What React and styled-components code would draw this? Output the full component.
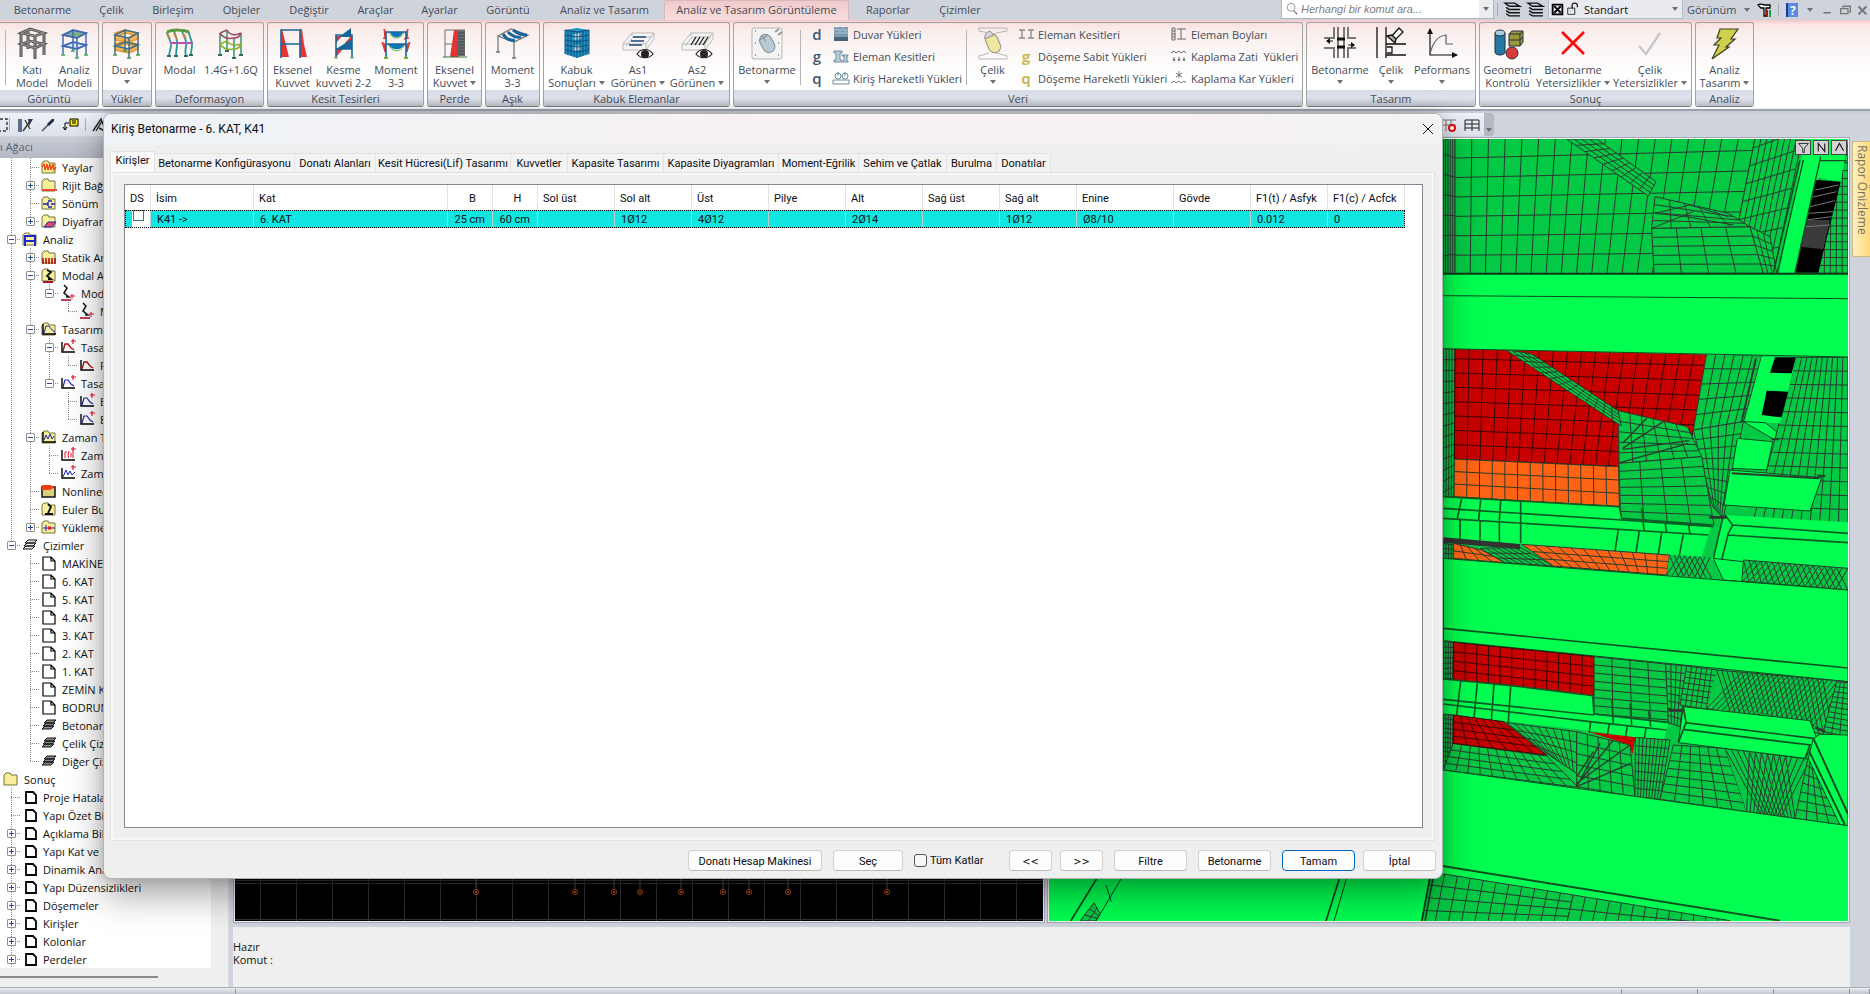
import React from 'react';
import styled, { createGlobalStyle } from 'styled-components';

/* ---------- ribbon drawings, 32x32 ---------- */

function Frame({ color = '#2a5cab', foot = '#3aa04a', width = 1.5, children }) {
  return (
    <g fill="none" stroke={color} strokeWidth={width}>
      {children}
      <path d="M4 8L14 3L27 6L18 11ZM4 19L14 15L27 18L18 22ZM4 8V28M14 3V24M27 6V28M18 11V31" />
      <path d="M2 28H6M12 24H16M25 28H29M16 31H20" stroke={foot} />
    </g>
  );
}

const art = {
  solid: (
    <g fill="none">
      <g stroke="#4b4b4b" strokeWidth="3">
        <path d="M5 6V30M12 3V22M28 6V28M19 9V32" />
        <path d="M5 6L14 2L28 6L19 9ZM5 17L14 14L28 17L19 21Z" strokeWidth="2.6" />
      </g>
      <g stroke="#9a9a9a">
        <path d="M5 6V30M12 3V22M28 6V28M19 9V32M5 6L14 2L28 6L19 9ZM5 17L14 14L28 17L19 21Z" />
      </g>
    </g>
  ),
  analysis: (
    <Frame color="#3f6bb5" foot="#44b04a">
      <path d="M4 8L14 3L27 6L18 11Z" fill="#7fae8c" />
      <path d="M4 19L14 15L27 18L18 22Z" fill="#dfe0f2" />
    </Frame>
  ),
  wall: (
    <Frame color="#3c6e8f" foot="#3aa04a">
      <path d="M4 6L14 3L27 6V12L18 15L4 13ZM4 17L14 14L27 17V22L18 26L4 23Z" fill="#f4b65c" stroke="#e79a2e" />
      <path d="M8 9L15 6L23 8L17 11ZM8 19L15 17L23 19L17 22Z" fill="#fff" stroke="#e79a2e" />
    </Frame>
  ),
  modal: (
    <g fill="none" strokeWidth="1.8">
      <path d="M3 5C9 2 20 3 25 5" stroke="#5a9b2f" strokeWidth="3" />
      <path d="M3 5C3 11 8 13 7 19S5 26 5 29M10 4C12 10 14 14 13 19S12 26 12 29" stroke="#1f9a9a" />
      <path d="M18 4C20 10 23 13 22 19S21 26 22 29M25 5C25 11 29 13 28 19S27 25 27 28" stroke="#1f9a9a" />
      <path d="M6 16H29" stroke="#b055b5" strokeWidth="2" />
      <path d="M3 6L6 12M10 6L13 12M19 6L22 12" stroke="#c78a2a" />
      <path d="M3 29H7M10 29H14M20 29H24M25 28H29" stroke="#2d6b5a" />
    </g>
  ),
  combo: (
    <g fill="none" strokeWidth="1.6">
      <path d="M5 6V28M12 3V24M26 6V28M19 11V31" stroke="#3b9b78" />
      <path d="M5 6C8 11 14 12 19 11C23 11 25 9 26 6M12 3C14 8 21 9 26 6M5 6L12 3" stroke="#a04a6a" />
      <path d="M5 17C8 22 14 23 19 22C23 22 25 20 26 17M12 14C14 18 21 19 26 17M5 17L12 14" stroke="#8fae2a" />
      <path d="M3 28H7M10 24H14M24 28H28M17 31H21" stroke="#2d6b5a" strokeWidth="2" />
    </g>
  ),
  axial: (
    <g>
      <path d="M4 2H5L12 30H4ZM23 2H25L27 17L30 30H23Z" fill="#e53232" />
      <path d="M4 31V3H23V31M4 17H23" fill="none" stroke="#15669c" strokeWidth="1.6" />
    </g>
  ),
  shear: (
    <g>
      <path d="M8 9L14 9L8 16ZM17 16L24 8V20H17ZM8 22L15 22L8 30Z" fill="#e53232" />
      <path d="M11 10L23 1V10ZM8 22L24 12V22Z" fill="#15669c" />
      <path d="M8 31V8H24V31M8 22H24" fill="none" stroke="#15669c" strokeWidth="1.6" />
      <path d="M6 31H10M22 31H26" stroke="#7fae2f" />
    </g>
  ),
  moment: (
    <g>
      <path d="M6 5L4 2L5 12ZM26 5L28 2L27 12ZM6 18L2 15L5 25ZM26 18L30 15L27 25ZM6 12L3 11ZM24 12L29 11Z" fill="#e53232" stroke="#e53232" />
      <path d="M10 5H23C21 12 12 12 10 5ZM8 17H25C21 24 12 24 8 17Z" fill="#0e74b8" />
      <path d="M8 17C12 26 21 26 25 17M9 5C12 13 21 13 24 5" fill="none" stroke="#56b83a" />
      <path d="M6 31V5H26V31M6 17H26" fill="none" stroke="#15669c" strokeWidth="1.6" />
      <path d="M4 31H8M24 31H28" stroke="#7fae2f" strokeWidth="2" />
    </g>
  ),
  shearWall: (
    <g>
      <path d="M15 3H20V30H11Z" fill="#e53232" />
      <path d="M6 30V3H26M6 17H16" fill="none" stroke="#6b7075" />
      <path d="M19 3H26V29H19Z" fill="#6b7075" />
      <path d="M19 6H26M19 9H26M19 12H26M19 15H26M19 18H26M19 21H26M19 24H26M19 27H26" stroke="#40454a" />
      <path d="M4 30H28" stroke="#2f7a3c" />
    </g>
  ),
  purlin: (
    <g fill="none" stroke="#777" strokeWidth="1.3">
      <path d="M1 9L14 2L31 8L17 15ZM1 9V25M17 15V31" />
      <path d="M6 7C9 12 13 14 18 13M11 5C15 9 19 11 24 10M16 3C20 6 24 8 30 8" stroke="#15669c" strokeWidth="3" />
      <path d="M-1 25H3M15 31H19" />
    </g>
  ),
  shell: (
    <g>
      <path d="M4 3L16 1L28 3V27L16 31L4 27Z" fill="#1e94c4" />
      <path d="M12 7L20 6V12L12 13ZM12 19L19 18L20 23L12 24Z" fill="#c4d8df" />
      <path d="M4 3L16 5L28 3M16 5V31M7 3V28M10 4V29M13 4V30M19 4V30M22 4V29M25 3V28M4 8L16 10L28 8M4 13L16 15L28 13M4 18L16 20L28 18M4 23L16 25L28 23M4 3V27M28 3V27" fill="none" stroke="#0e4f7d" />
    </g>
  ),
  eye: (
    <g>
      <path d="M15 27C19 21 27 21 31 27C27 32 19 32 15 27Z" fill="#fff" stroke="#222" strokeWidth="1.2" />
      <circle cx="23" cy="27" r="4" fill="#2a2020" />
    </g>
  ),
  slab: (
    <path d="M1 17L10 6H32V12L24 23H1ZM1 17H24L32 6M24 17V23M10 6V9M4 19L11 10H30" fill="#f7f7f7" stroke="#b9b9b9" />
  ),
  bolt: (
    <path d="M11 2H29L22 12H26L17 20H20L3 32L10 18H5L12 11H8Z" fill="#cfd04c" stroke="#3d3d20" strokeWidth="1.2" />
  ),
  cross: <path d="M5 5L27 27M27 5L5 27" stroke="#ff0808" strokeWidth="2.6" fill="none" />,
  check: <path d="M5 19L12 27L26 6" stroke="#c6c7cd" strokeWidth="2.4" fill="none" />,
  perf: (
    <g fill="none" stroke="#111" strokeWidth="1.2">
      <path d="M4 2V28H31" />
      <path d="M4 1L1 7H7ZM32 28L26 25V31Z" fill="#111" stroke="none" />
      <path d="M4 27C7 14 12 9 20 8V17H27" stroke="#4c6478" />
    </g>
  ),
  solids: (
    <g stroke="#22303c" strokeWidth="1">
      <path d="M3 6V25C3 29 13 29 13 25V6" fill="#2478a6" />
      <ellipse cx="8" cy="6" rx="5" ry="3" fill="#a9cfe2" />
      <path d="M17 7L20 4H31V15L28 19H17Z" fill="#9a983a" />
      <path d="M17 7H28V19M28 7L31 4M17 13H28L31 10" fill="none" />
      <circle cx="20" cy="26" r="6" fill="#d93a3a" />
    </g>
  ),
  rcDesign: (
    <g fill="none" stroke="#777" strokeWidth="2">
      <path d="M10 0V11H0M14 0V31M10 31V21H0M20 0V31M24 0V11H32M24 31V21H32" />
      <path d="M13 12H21M13 20H21" stroke="#111" strokeWidth="3" />
      <path d="M3 14H9M24 18H29" stroke="#111" strokeWidth="1.2" />
      <path d="M2 14L6 11V17ZM31 18L27 15V21Z" fill="#111" stroke="none" />
    </g>
  ),
  steelDesign: (
    <g fill="none" stroke="#111" strokeWidth="1.3">
      <path d="M2 0V31M11 0V31M11 17H31M11 28H31M12 20H17V26H12" />
      <path d="M16 10L24 1L28 5L20 13Z" fill="#fff" />
      <path d="M12 9L17 8L21 12L20 16Z" fill="#aaa" />
    </g>
  ),
  mouse: (
    <g stroke="#7f8a92" fill="none">
      <rect x="1" y="1" width="30" height="31" rx="2" fill="#f4f4f4" stroke="#b5b5b5" />
      <path d="M4 4H5M4 28H5M27 28H28M4 16H5M27 16H28M24 5L28 2M27 8L31 5" stroke="#999" strokeWidth="2" />
      <rect x="10" y="7" width="12" height="19" rx="6" fill="#b8cad4" transform="rotate(-28 16 16)" />
      <path d="M9 13L17 8M11 8L15 15" />
    </g>
  ),
  steelMouse: (
    <g stroke="#8b8b8b" fill="none">
      <path d="M2 1H30V4L19 6M2 1V4L12 6M2 32H30V29L19 26M2 32V29L12 26" stroke="#b5b5b5" />
      <rect x="10" y="6" width="12" height="20" rx="6" fill="#f1e8a0" transform="rotate(-24 16 16)" />
      <path d="M8 12L17 8L13 4C9 5 7 9 8 12Z" fill="#d4d4d4" />
    </g>
  ),
};

art.as1 = (
  <g>
    {art.slab}
    <path d="M11 10H24M9 14H22M7 18H20" stroke="#1d4a7a" strokeWidth="1.6" />
    {art.eye}
  </g>
);
art.as2 = (
  <g>
    {art.slab}
    <path d="M10 18L15 10M14 18L19 10M18 18L23 10M22 18L27 10" stroke="#222" strokeWidth="1.4" />
    {art.eye}
  </g>
);

/* ---------- 16x16 drawings ---------- */

const folder = (
  <path d="M1 14V4L3 2H7L8 4H14V14Z" fill="#f8ef9c" stroke="#77733a" />
);
const axes = <path d="M2 3V13H15" fill="none" stroke="#000" strokeWidth="1.4" />;
const plus = <path d="M13 0V5M11 2H16" stroke="#e8112d" strokeWidth="1.2" />;
const curve = 'M3 12L5 5H8L11 9L14 11';
const stack = 'M6 3H15L12 6H3ZM5 6H14L11 9H2ZM4 9H13L10 12H1Z';

const small = {
  folder,
  spring: <g>{folder}<path d="M1 8L3 5L4 11L6 5L7 11L9 5L10 11L12 5L13 11L15 8" fill="none" stroke="#f04a1a" strokeWidth="1.4" /></g>,
  rigid: <g>{folder}<path d="M1 13H16" stroke="#f04a3a" strokeWidth="2" /></g>,
  damper: <g>{folder}<path d="M2 9H7M7 7V11M11 6H7M11 12H7M10 9H14" fill="none" stroke="#1c23b4" strokeWidth="1.4" /></g>,
  diaphragm: <g>{folder}<path d="M3 14L7 9H15L11 14Z" fill="#e54a6b" stroke="#1c23b4" /></g>,
  frame: <g>{folder}<path d="M3 15V5H13V15M3 10H13" fill="none" stroke="#1a28d2" strokeWidth="2" /></g>,
  loads: <g>{folder}<path d="M2 9V15M5 9V15M8 9V15M11 9V15M14 9V15" stroke="#b01010" strokeWidth="1.6" /></g>,
  modeFolder: <g>{folder}<path d="M6 3L10 5L6 9L10 12H7" fill="none" stroke="#111" strokeWidth="1.8" /><path d="M2 15H12" stroke="#b01030" strokeWidth="2" /></g>,
  mode: <g><path d="M4 0L7 3L4 8L9 12H6" fill="none" stroke="#111" strokeWidth="1.5" /><path d="M1 15H11" stroke="#b01030" strokeWidth="1.6" /><path d="M12 9V14M10 11H15" stroke="#e8112d" /></g>,
  spectrumFolder: <g>{folder}{axes}<path d={curve} fill="none" stroke="#1c23b4" /></g>,
  spectrumRed: <g>{axes}{plus}<path d={curve} fill="none" stroke="#b01010" strokeWidth="1.4" /></g>,
  redCurve: <g>{axes}<path d={curve} fill="none" stroke="#b01010" strokeWidth="1.4" /></g>,
  spectrumBlue: <g>{axes}{plus}<path d={curve} fill="none" stroke="#1c23c4" strokeWidth="1.2" /></g>,
  timeFolder: <g>{folder}{axes}<path d="M3 11L5 6L7 10L9 5L11 10L13 7" fill="none" stroke="#1c23b4" /></g>,
  timeRed: <g>{axes}{plus}<path d="M5 5V11M5 5H7M9 4L8 8L9 11M11 6V10M13 5V11" fill="none" stroke="#e8112d" /></g>,
  timeBlue: <g>{axes}{plus}<path d="M3 12L6 5L8 10L10 6L12 10L15 7" fill="none" stroke="#1c23c4" /></g>,
  nonlinear: <g><path d="M1 14V4H14V14Z" fill="#d9cf7a" stroke="#111" strokeWidth="1.5" /><path d="M1 2H9L14 4L9 7H1Z" fill="#f0400f" /></g>,
  euler: <g>{folder}<path d="M7 3L10 6L7 12M4 13H12" fill="none" stroke="#111" strokeWidth="1.8" /></g>,
  combos: <g>{folder}<path d="M2 9H14M5 6V12" stroke="#1c23b4" /><path d="M7 9H10" stroke="#e8112d" strokeWidth="3" /></g>,
  stack: <path d={stack} fill="#e8e8e8" stroke="#111" />,
  stackDark: <path d={stack} fill="#8a8a8a" stroke="#111" />,
  sheet: <path d="M2 2H10L14 6V15H2ZM10 2V6H14" fill="#fff" stroke="#000" strokeWidth="1.2" />,
  page: <path d="M4 3H11L14 6V14H4Z" fill="#fff" stroke="#000" strokeWidth="1.8" />,
  brick: <g><path d="M1 1H15V15H1Z" fill="#7b9ab0" /><path d="M1 11H15V15H1Z" fill="#48637a" /><path d="M1 4H15M1 7H15M4 1V4M10 1V4M7 4V7M13 4V7" stroke="#a9c0cf" /></g>,
  sections: <path d="M1 3H9V5H7V12H9V14H1V12H3V5H1ZM9 7H15V8H14V13H15V14H10V13H11V8H9Z" fill="#b9d0de" stroke="#6d8ba0" />,
  beamLoad: <g fill="none" stroke="#6d8ba0"><circle cx="5" cy="6" r="3" /><circle cx="12" cy="6" r="3" /><path d="M0 10H16V14H0ZM5 6V2M12 6V2" /></g>,
  ibeams: <path d="M1 4H7M4 4V12M1 12H7M10 4H16M13 4V12M10 12H16" stroke="#8a8a8a" strokeWidth="1.4" fill="none" />,
  lengths: <path d="M1 2H4V14H1ZM1 5H4M1 8H4M1 11H4M6 3H15M10 3V13M6 13H15" stroke="#666" fill="none" />,
  coverDead: <path d="M0 5L3 3L5 5L8 3L10 5L13 3L15 5M3 9V12M8 9V12M13 9V12M2 11L3 13L4 11M7 11L8 13L9 11M12 11L13 13L14 11" stroke="#666" fill="none" />,
  coverSnow: <path d="M0 13L3 11L5 13L8 11L10 13L13 11L15 13M8 1V8M5 3L11 7M11 3L5 7" stroke="#777" fill="none" />,
  layers: <path d="M1 2H10L15 5H5ZM2 6L5 8H15M2 9L5 11H15M2 12L5 14H15" fill="none" stroke="#111" strokeWidth="1.3" />,
  lock: <g><path d="M2 7H10V14H2Z" fill="#fff" stroke="#111" /><path d="M7 7V3C8 0 13 1 13 4V6" fill="none" stroke="#111" strokeWidth="1.4" /><path d="M4 9H5M7 9H8M5 11H6" stroke="#2a4a9a" /></g>,
  boxed: <path d="M2 2H14V14H2ZM4 4L12 12M12 4L4 12" fill="none" stroke="#000" strokeWidth="2.2" />,
  tools: <g><path d="M1 3C3 1 5 3 8 3H13V6H9V14H7V6H4Z" fill="#fff" stroke="#000" strokeWidth="1.3" /><path d="M10 8V15" stroke="#b01010" strokeWidth="2" /><path d="M13 8V15" stroke="#1aa03a" strokeWidth="2" /></g>,
  help: <g><path d="M2 1H14V15H2Z" fill="#5a8be0" /><path d="M2 1H4V15H2Z" fill="#1d3c8a" /></g>,
  minimize: <path d="M3 12H12" stroke="#777" strokeWidth="2" />,
  restore: <path d="M5 7V4H14V11H12M2 7H11V13H2Z" fill="none" stroke="#777" strokeWidth="1.6" />,
  close: <path d="M4 4L13 13M13 4L4 13" stroke="#777" strokeWidth="2.4" />,
  ruler: <g><path d="M1 2H5V15H1Z" fill="#5a6f86" /><path d="M6 14L14 3M8 3L13 12" stroke="#333" strokeWidth="1.3" /><path d="M11 2L16 2L12 9Z" fill="#2a3c55" /></g>,
  pen: <g><path d="M2 14L9 7" stroke="#555" strokeWidth="1.6" /><path d="M9 9L7 7L12 2L14 2V4Z" fill="#1d2c44" /></g>,
  note: <g><path d="M7 2H15V9H7Z" fill="#ffec1f" stroke="#000" /><path d="M9 4H13M9 6H13M6 6H2V13M0 10L2 13L4 10" fill="none" stroke="#000" /></g>,
  dimension: <path d="M0 14L4 8L8 2L11 10M3 14L9 4M6 11L12 14M12 2V12" fill="none" stroke="#222" strokeWidth="1.4" />,
  selectBox: <path d="M0 2H12V14H0" fill="none" stroke="#333" strokeDasharray="3 2" strokeWidth="1.4" />,
  gridRec: <g><path d="M1 3H15M1 8H15M5 3V14M10 3V14M1 3V14" fill="none" stroke="#777" /><circle cx="11" cy="11" r="3" fill="#fff" stroke="#e01010" strokeWidth="2" /></g>,
  grid: <path d="M1 3H15M1 7H15M1 3V14M8 3V14M15 3V14M1 11H15" fill="none" stroke="#222" />,
  search: <g fill="none" stroke="#8a8a8a"><circle cx="7" cy="6" r="4.5" /><path d="M10 10L14 14" strokeWidth="1.6" /></g>,
  filter: <path d="M2 3H14L9 9V14H7V9Z" fill="none" stroke="#111" />,
  north: <path d="M4 13V3L12 13V3" fill="none" stroke="#111" strokeWidth="1.3" />,
  up: <path d="M3 12L8 3L13 12" fill="none" stroke="#111" strokeWidth="1.3" />,
};

function Icon({ name, size = 16 }) {
  return (
    <Svg viewBox="0 0 16 16" $size={size} aria-hidden="true">
      {small[name]}
    </Svg>
  );
}

/* ---------- data ---------- */

const menu = [
  ['Betonarme', 85],
  ['Çelik', 53],
  ['Birleşim', 70],
  ['Objeler', 67],
  ['Değiştir', 68],
  ['Araçlar', 65],
  ['Ayarlar', 63],
  ['Görüntü', 74],
  ['Analiz ve Tasarım', 119],
  ['Analiz ve Tasarım Görüntüleme', 185],
  ['Raporlar', 78],
  ['Çizimler', 66],
];

const treeRows = [
  ['|t', '', 'spring', 'Yaylar'],
  ['|t', '+', 'rigid', 'Rijit Bağlar'],
  ['|t', '', 'damper', 'Sönüm'],
  ['|l', '+', 'diaphragm', 'Diyafram'],
  ['t', '-', 'frame', 'Analiz'],
  ['|t', '+', 'loads', 'Statik Analiz'],
  ['|t', '-', 'modeFolder', 'Modal Analiz'],
  ['||l', '-', 'mode', 'Modal'],
  ['||.l', '', 'mode', 'Mod'],
  ['|t', '-', 'spectrumFolder', 'Tasarım'],
  ['||t', '-', 'spectrumRed', 'Tasarım'],
  ['|||l', '', 'redCurve', 'R'],
  ['||l', '-', 'spectrumBlue', 'Tasarım'],
  ['||.t', '', 'spectrumBlue', 'E'],
  ['||.l', '', 'spectrumBlue', 'E'],
  ['|t', '-', 'timeFolder', 'Zaman Tanım'],
  ['||t', '', 'timeRed', 'Zaman'],
  ['||l', '', 'timeBlue', 'Zaman'],
  ['|t', '', 'nonlinear', 'Nonlineer'],
  ['|t', '', 'euler', 'Euler Burkulma'],
  ['|l', '+', 'combos', 'Yüklemeler'],
  ['l', '-', 'stack', 'Çizimler'],
  ['.t', '', 'sheet', 'MAKİNE'],
  ['.t', '', 'sheet', '6. KAT'],
  ['.t', '', 'sheet', '5. KAT'],
  ['.t', '', 'sheet', '4. KAT'],
  ['.t', '', 'sheet', '3. KAT'],
  ['.t', '', 'sheet', '2. KAT'],
  ['.t', '', 'sheet', '1. KAT'],
  ['.t', '', 'sheet', 'ZEMİN KAT'],
  ['.t', '', 'sheet', 'BODRUM'],
  ['.t', '', 'stackDark', 'Betonarme'],
  ['.t', '', 'stackDark', 'Çelik Çizim'],
  ['.l', '', 'stackDark', 'Diğer Çizim'],
  ['', '', 'folder', 'Sonuç'],
  ['t', '', 'page', 'Proje Hataları'],
  ['t', '', 'page', 'Yapı Özet Bilgi'],
  ['t', '+', 'page', 'Açıklama Bilgi'],
  ['t', '+', 'page', 'Yapı Kat ve'],
  ['t', '+', 'page', 'Dinamik Analiz'],
  ['t', '+', 'page', 'Yapı Düzensizlikleri'],
  ['t', '+', 'page', 'Döşemeler'],
  ['t', '+', 'page', 'Kirişler'],
  ['t', '+', 'page', 'Kolonlar'],
  ['t', '+', 'page', 'Perdeler'],
];

const dialogTabs = [
  ['Kirişler', 45],
  ['Betonarme Konfigürasyonu', 140],
  ['Donatı Alanları', 81],
  ['Kesit Hücresi(Lif) Tasarımı', 135],
  ['Kuvvetler', 57],
  ['Kapasite Tasarımı', 96],
  ['Kapasite Diyagramları', 115],
  ['Moment-Eğrilik', 80],
  ['Sehim ve Çatlak', 88],
  ['Burulma', 50],
  ['Donatılar', 54],
];

const columns = [
  { title: 'DS', width: 26 },
  { title: 'İsim', width: 103, value: 'K41 ->' },
  { title: 'Kat', width: 194, value: '6. KAT' },
  { title: 'B', width: 45, value: '25 cm', head: 'center', align: 'right' },
  { title: 'H', width: 45, value: '60 cm', head: 'center', align: 'right' },
  { title: 'Sol üst', width: 77 },
  { title: 'Sol alt', width: 77, value: '1Ø12' },
  { title: 'Üst', width: 77, value: '4Ø12' },
  { title: 'Pilye', width: 77 },
  { title: 'Alt', width: 77, value: '2Ø14' },
  { title: 'Sağ üst', width: 77 },
  { title: 'Sağ alt', width: 77, value: '1Ø12' },
  { title: 'Enine', width: 97, value: 'Ø8/10' },
  { title: 'Gövde', width: 77 },
  { title: 'F1(t) / Asfyk', width: 77, value: '0.012' },
  { title: 'F1(c) / Acfck', width: 77, value: '0' },
];

/* ---------- 3D model ---------- */

const bright = '#00ff50';
const dark = '#03c944';
const red = '#c80000';
const orange = '#ff6414';

// lean > 0 crosses two slanted families of lines instead of upright ones
function meshPath([a, b, c, d], nx, ny, lean) {
  const at = (p, q, t) => [p[0] + (q[0] - p[0]) * t, p[1] + (q[1] - p[1]) * t];
  const seg = (p, q) => `M${p[0].toFixed(1)} ${p[1].toFixed(1)}L${q[0].toFixed(1)} ${q[1].toFixed(1)}`;
  let out = '';
  for (let i = 0; i <= nx; i += 1) {
    if (lean) {
      if (i + lean <= nx) out += seg(at(a, b, i / nx), at(d, c, (i + lean) / nx));
      if (i - lean >= 0) out += seg(at(a, b, i / nx), at(d, c, (i - lean) / nx));
    } else {
      out += seg(at(a, b, i / nx), at(d, c, i / nx));
    }
  }
  for (let j = 0; j <= ny; j += 1) out += seg(at(a, d, j / ny), at(b, c, j / ny));
  return out;
}

// q is four corners, clockwise from the top left
function Mesh({ q, nx, ny, lean = 0, fill = dark }) {
  const pts = [];
  for (let i = 0; i < 8; i += 2) pts.push([q[i], q[i + 1]]);
  return (
    <g>
      <polygon points={q.join(' ')} fill={fill} />
      <path d={meshPath(pts, nx, ny, lean)} fill="none" stroke={fill === red ? '#3c0505' : '#2c3a30'} />
    </g>
  );
}

function Model() {
  return (
    <Scene viewBox="-1056 87 2400 2346" preserveAspectRatio="xMaxYMin slice" strokeWidth="3" role="img" aria-label="3D model">
      <rect x="-1056" y="80" width="2400" height="2360" fill={dark} />

      {/* top storey */}
      <Mesh q={[130, 70, 165, 86, 165, 490, 130, 500]} nx={5} ny={7} />
      <Mesh q={[165, 86, 1070, 60, 985, 490, 165, 494]} nx={18} ny={7} />
      <Mesh q={[1070, 60, 1225, 0, 1125, 470, 985, 490]} nx={8} ny={8} />
      <Mesh q={[755, 355, 1050, 350, 1090, 490, 762, 490]} nx={4} ny={5} />
      <Mesh q={[765, 260, 985, 310, 1050, 350, 755, 355]} nx={5} ny={4} />
      <path d="M765 310L870 285L985 320M755 355L880 305M765 310L860 320L1000 345" fill="none" stroke="#2c3a30" />
      <Mesh q={[500, 87, 590, 87, 768, 215, 745, 258]} nx={4} ny={9} />
      <Mesh q={[1050, 350, 1110, 380, 1130, 490, 1090, 490]} nx={3} ny={5} />
      <Mesh q={[1262, 87, 1344, 87, 1344, 490, 1255, 490]} nx={5} ny={17} />
      <polygon points="1215,87 1344,87 1322,215 1255,205 1185,488 1138,488" fill={bright} />
      <polygon points="1248,210 1322,215 1255,488 1185,488" fill="#000" />
      <polygon points="1222,330 1290,330 1270,418 1200,410" fill="#3a3a3a" />
      <path d="M1245 240L1315 225M1235 262L1310 245M1230 290L1305 272M1225 310L1300 305M1220 330L1295 320M1218 350L1290 345" stroke="#777" />
      <path d="M1200 150L1120 488M1210 150L1132 488M1262 140L1185 488M1258 152H1340" stroke="#0c4a20" strokeWidth="4" />

      {/* first beam, then the storey below */}
      <Mesh q={[130, 716, 165, 718, 162, 1160, 130, 1180]} nx={4} ny={14} />
      <Mesh q={[165, 703, 927, 722, 856, 1078, 163, 1047]} nx={18} ny={8} fill={red} />
      <Mesh q={[163, 1047, 656, 1070, 658, 1190, 162, 1160]} nx={13} ny={3} fill={orange} />
      <Mesh q={[920, 730, 1085, 738, 1030, 935, 880, 960]} nx={6} ny={5} />
      <Mesh q={[880, 960, 1030, 935, 970, 1225, 938, 1190]} nx={6} ny={8} />
      <Mesh q={[655, 902, 862, 950, 905, 1040, 657, 1060]} nx={6} ny={5} />
      <Mesh q={[657, 1060, 905, 1040, 942, 1245, 662, 1228]} nx={4} ny={7} />
      <path d="M668 1015L790 935M668 1018L868 992M668 1000L740 925M660 1058L865 1000" stroke="#2c3a30" strokeWidth="4" />
      <Mesh q={[315, 718, 395, 732, 655, 903, 664, 948]} nx={4} ny={13} />
      <Mesh q={[1190, 742, 1344, 742, 1344, 1240, 1060, 1230]} nx={10} ny={12} />
      <polygon points="130,490 1344,490 1344,742 130,716" fill={bright} />
      <path d="M130 491H1344" stroke="#123818" strokeWidth="6" />
      <path d="M130 557L1344 566M130 716L1344 741" stroke="#0c4a20" />
      <polygon points="1085,740 1190,742 1140,940 1035,935" fill={bright} />
      <polygon points="1125,742 1188,742 1175,790 1110,788" fill="#000" />
      <polygon points="1100,842 1165,845 1145,922 1085,915" fill="#000" />
      <polygon points="1030,935 1095,938 1130,965 1125,990" fill={bright} stroke="#0c4a20" />
      <polygon points="1012,985 1118,995 1100,1080 997,1075" fill={bright} stroke="#0c4a20" />
      <polygon points="990,1080 1265,1103 1230,1203 972,1185" fill={bright} stroke="#0c4a20" />
      <path d="M1068 745L1025 935M995 1090L1258 1105M1252 1097H1276M1115 988H1136" stroke="#2c3a30" strokeWidth="6" />

      {/* stepped beam */}
      <polygon points="130,1160 658,1190 665,1228 935,1245 905,1340 130,1287" fill={bright} />
      <path d="M130 1160L658 1190L665 1225L935 1245M130 1195L665 1230L940 1250M130 1225L925 1275M185 1165L172 1225M242 1168L236 1230M302 1172L298 1232M362 1175V1300M180 1228V1288M240 1232V1290M298 1235V1295M655 1258L645 1325M718 1262L708 1328M785 1268L775 1332M850 1272L838 1337M725 1195L732 1260M795 1235L800 1268M865 1240L870 1272" fill="none" stroke="#0b5c24" strokeWidth="5" />
      <polygon points="975,1215 1344,1237 1344,1375 935,1350" fill={bright} />
      <path d="M975 1215L998 1245L1344 1270M998 1245L985 1270L965 1350M985 1275L1344 1298M970 1215L940 1345" fill="none" stroke="#0b5c24" strokeWidth="5" />
      <path d="M928 1222H980" stroke="#333" strokeWidth="8" />
      <Mesh q={[130, 1300, 162, 1305, 162, 1345, 130, 1345]} nx={4} ny={3} />
      <Mesh q={[160, 1300, 245, 1320, 315, 1358, 160, 1345]} nx={4} ny={2} fill={orange} />
      <Mesh q={[240, 1315, 360, 1312, 460, 1368, 315, 1358]} nx={7} ny={3} />
      <Mesh q={[365, 1303, 808, 1335, 800, 1395, 460, 1368]} nx={12} ny={3} fill={orange} />
      <Mesh q={[808, 1335, 930, 1342, 935, 1405, 800, 1395]} nx={8} ny={0} lean={2} />
      <Mesh q={[1030, 1350, 1344, 1375, 1344, 1440, 1010, 1412]} nx={18} ny={1} lean={2} />
      <polygon points="940,1345 1030,1355 1025,1415 970,1410" fill={bright} stroke="#0c4a20" />
      <path d="M130 1290L360 1310" stroke="#333" strokeWidth="16" />

      {/* second beam */}
      <polygon points="130,1345 1344,1440 1344,1715 130,1592" fill={bright} stroke="#0c4a20" />
      <path d="M130 1555L1344 1674" stroke="#0b5020" strokeWidth="5" />
      <Mesh q={[130, 1595, 160, 1597, 158, 1705, 130, 1708]} nx={4} ny={7} />
      <Mesh q={[160, 1597, 582, 1640, 580, 1758, 160, 1710]} nx={12} ny={4} fill={red} />
      <Mesh q={[582, 1640, 797, 1662, 808, 1830, 582, 1812]} nx={4} ny={7} />
      <Mesh q={[797, 1662, 860, 1668, 840, 1850, 805, 1838]} nx={4} ny={8} />
      <Mesh q={[860, 1668, 950, 1680, 935, 1800, 840, 1785]} nx={6} ny={7} />
      <Mesh q={[950, 1680, 1344, 1715, 1300, 1880, 920, 1795]} nx={26} ny={1} lean={5} />
      <Mesh q={[1310, 1715, 1344, 1718, 1344, 1880, 1270, 1865]} nx={3} ny={10} />
      <polygon points="130,1707 335,1727 578,1757 582,1812 805,1838 790,1895 570,1862 130,1812" fill={bright} />
      <path d="M130 1707L335 1727L578 1757L582 1812L808 1838M130 1768L582 1815M130 1782L570 1835L800 1860M182 1712L170 1815M232 1717L222 1825M282 1722L274 1832M332 1727L325 1838M572 1835L568 1868M628 1842L622 1875M682 1848L676 1882M738 1855L732 1888M635 1770L640 1840M690 1780L695 1845M745 1800L752 1850" fill="none" stroke="#0b5c24" strokeWidth="5" />

      {/* lowest storey */}
      <Mesh q={[130, 1812, 160, 1815, 155, 1985, 130, 1980]} nx={4} ny={12} />
      <Mesh q={[160, 1900, 440, 1938, 535, 2032, 130, 1980]} nx={11} ny={4} />
      <Mesh q={[160, 1815, 310, 1835, 440, 1935, 160, 1900]} nx={7} ny={4} fill={red} />
      <Mesh q={[320, 1838, 530, 1865, 530, 1990, 440, 1930]} nx={9} ny={4} />
      <Mesh q={[530, 1865, 690, 1905, 705, 2060, 530, 2030]} nx={5} ny={5} />
      <polygon points="565,1865 706,1882 697,1935 690,1905" fill={red} />
      <path d="M530 2025L640 1890M530 2020L690 1905M530 2030L692 1960M530 2030L600 1900M530 2000L580 1925" stroke="#2c3a30" strokeWidth="4" />
      <Mesh q={[706, 1882, 810, 1890, 780, 2068, 705, 2060]} nx={9} ny={0} lean={2} />
      <Mesh q={[706, 1882, 810, 1890, 780, 2068, 705, 2060]} nx={9} ny={7} />
      <Mesh q={[820, 1905, 975, 1915, 1040, 2105, 780, 2068]} nx={6} ny={7} />
      <Mesh q={[975, 1915, 1230, 1948, 1185, 2125, 1040, 2105]} nx={14} ny={1} lean={4} />
      <Mesh q={[1225, 1940, 1245, 1960, 1320, 2145, 1185, 2125]} nx={4} ny={7} />
      <polygon points="850,1790 1230,1832 1250,1885 1215,1945 835,1898" fill={bright} stroke="#0c4a20" />
      <path d="M855 1838L1240 1885M850 1858L1230 1905L1215 1945M850 1790L858 1838L835 1898" fill="none" stroke="#0b5020" strokeWidth="5" />
      <polygon points="1240,1885 1260,1873 1344,1875 1344,2147 1320,2145 1225,1945" fill={bright} stroke="#0c4a20" />
      <path d="M1240 1885L1344 2112M1228 1925L1335 2145" fill="none" stroke="#0b5020" strokeWidth="6" />
      <path d="M805 1801H848M1245 1852L1275 1865" stroke="#333" strokeWidth="8" />

      {/* third beam and foreground */}
      <polygon points="130,1980 1344,2147 1344,2440 -1056,2440 -1056,1980" fill={bright} />
      <path d="M130 1980L1344 2147" stroke="#0c4a20" />
      <path d="M90 2262L1140 2432" stroke="#0b5020" strokeWidth="6" />
      <Mesh q={[95, 2286, 520, 2355, 500, 2440, 65, 2440]} nx={11} ny={4} />
      <Mesh q={[520, 2355, 990, 2432, 990, 2460, 500, 2440]} nx={13} ny={2} />
      <path d="M90 2300L65 2433M100 2300L75 2433M-177 2290L-222 2433M-900 2290L-988 2433" stroke="#0b4020" strokeWidth="5" />
      <path d="M-156 2290L-198 2433M-827 2290L-912 2433M-882 2325L-866 2375" fill="none" stroke="#0b4020" />
      <Mesh q={[-918, 2378, -900, 2410, -912, 2433, -960, 2433]} nx={2} ny={3} />
    </Scene>
  );
}

const axisMarks = [476, 575, 614, 640, 681, 723, 749, 788, 887];

function Plan() {
  const lines = Array.from({ length: 22 }, (_, i) => 260 + i * 36);
  return (
    <Scene viewBox="235 139 808 782" preserveAspectRatio="xMinYMax slice" role="img" aria-label="Plan">
      <rect x="235" y="139" width="808" height="782" fill="#000" />
      <path d={`${lines.map((x) => `M${x}.5 139V921`).join('')}M235 880.5H1043M235 883.5H1043M235 919.5H1043`} stroke="#333" />
      {axisMarks.map((x) => (
        <g key={x} fill="none">
          <path d={`M${x} 870V889`} stroke="#555" />
          <circle cx={x} cy="892" r="2.5" stroke="#d8401a" />
          <path d={`M${x - 1} 892H${x + 1}`} stroke="#e0c02a" />
        </g>
      ))}
    </Scene>
  );
}

/* ---------- ribbon ---------- */

function Big({ art: name, lines, w, menu: hasMenu }) {
  const last = lines.length - 1;
  return (
    <BigButton type="button" $w={w}>
      <Svg viewBox="0 0 32 32" $size={32} aria-hidden="true">
        {art[name]}
      </Svg>
      {lines.map((line, i) => (
        <span key={line}>
          {line}
          {hasMenu && last > 0 && i === last && <Caret $inline />}
        </span>
      ))}
      {hasMenu && last === 0 && <Caret $below />}
    </BigButton>
  );
}

function Rows({ items, w }) {
  return (
    <RowColumn $w={w}>
      {items.map(([icon, label]) => (
        <RowButton type="button" key={label}>
          {icon.length === 1 ? <Letter $gold>{icon}</Letter> : <Icon name={icon} />}
          {label}
        </RowButton>
      ))}
    </RowColumn>
  );
}

function Group({ title, children, w }) {
  return (
    <GroupBox $w={w}>
      <GroupBody>{children}</GroupBody>
      <GroupTitle>{title}</GroupTitle>
    </GroupBox>
  );
}

function Ribbon() {
  return (
    <RibbonBar>
      <Group title="Görüntü" w={99}>
        <Rule $gap={5} />
        <Big art="solid" lines={['Katı', 'Model']} w={42} />
        <Big art="analysis" lines={['Analiz', 'Modeli']} w={43} />
      </Group>
      <Group title="Yükler" w={50}>
        <Big art="wall" lines={['Duvar']} w={48} menu />
      </Group>
      <Group title="Deformasyon" w={109}>
        <Big art="modal" lines={['Modal']} w={47} />
        <Big art="combo" lines={['1.4G+1.6Q']} w={56} />
      </Group>
      <Group title="Kesit Tesirleri" w={157}>
        <Big art="axial" lines={['Eksenel', 'Kuvvet']} w={49} />
        <Big art="shear" lines={['Kesme', 'kuvveti 2-2']} w={53} />
        <Big art="moment" lines={['Moment', '3-3']} w={52} />
      </Group>
      <Group title="Perde" w={55}>
        <Big art="shearWall" lines={['Eksenel', 'Kuvvet']} w={53} menu />
      </Group>
      <Group title="Aşık" w={55}>
        <Big art="purlin" lines={['Moment', '3-3']} w={53} />
      </Group>
      <Group title="Kabuk Elemanlar" w={187}>
        <Big art="shell" lines={['Kabuk', 'Sonuçları']} w={65} menu />
        <Big art="as1" lines={['As1', 'Görünen']} w={58} menu />
        <Big art="as2" lines={['As2', 'Görünen']} w={60} menu />
      </Group>
      <Group title="Veri" w={570}>
        <Big art="mouse" lines={['Betonarme']} w={66} menu />
        <Rule />
        <RowColumn $w={32} $center>
          {['d', 'g', 'q'].map((l) => (
            <RowButton type="button" key={l}>
              <Letter>{l}</Letter>
            </RowButton>
          ))}
        </RowColumn>
        <Rows
          w={133}
          items={[
            ['brick', 'Duvar Yükleri'],
            ['sections', 'Eleman Kesitleri'],
            ['beamLoad', 'Kiriş Hareketli Yükleri'],
          ]}
        />
        <Rule />
        <Big art="steelMouse" lines={['Çelik']} w={51} menu />
        <Rows
          w={153}
          items={[
            ['ibeams', 'Eleman Kesitleri'],
            ['g', 'Döşeme Sabit Yükleri'],
            ['q', 'Döşeme Hareketli Yükleri'],
          ]}
        />
        <Rows
          w={131}
          items={[
            ['lengths', 'Eleman Boyları'],
            ['coverDead', 'Kaplama Zati\u00a0 Yükleri'],
            ['coverSnow', 'Kaplama Kar Yükleri'],
          ]}
        />
      </Group>
      <Group title="Tasarım" w={170}>
        <Big art="rcDesign" lines={['Betonarme']} w={66} menu />
        <Big art="steelDesign" lines={['Çelik']} w={36} menu />
        <Big art="perf" lines={['Peformans']} w={66} menu />
      </Group>
      <Group title="Sonuç" w={213}>
        <Big art="solids" lines={['Geometri', 'Kontrolü']} w={55} />
        <Big art="cross" lines={['Betonarme', 'Yetersizlikler']} w={76} menu />
        <Big art="check" lines={['Çelik', 'Yetersizlikler']} w={78} menu />
      </Group>
      <Group title="Analiz" w={59}>
        <Big art="bolt" lines={['Analiz', 'Tasarım']} w={57} menu />
      </Group>
    </RibbonBar>
  );
}

/* ---------- dialog ---------- */

function BeamDialog() {
  return (
    <Dialog role="dialog" aria-labelledby="dialog-title">
      <TitleBar>
        <DialogTitle id="dialog-title">Kiriş Betonarme - 6. KAT, K41</DialogTitle>
        <CloseButton type="button" aria-label="Kapat">
          <svg viewBox="0 0 10 10" width="10" height="10">
            <path d="M0 0L10 10M10 0L0 10" stroke="#111" fill="none" />
          </svg>
        </CloseButton>
      </TitleBar>
      <TabList role="tablist">
        {dialogTabs.map(([label, w], i) => (
          <Tab type="button" role="tab" key={label} $w={w} $active={i === 0} aria-selected={i === 0}>
            {label}
          </Tab>
        ))}
      </TabList>
      <TabPage role="tabpanel">
        <ListBox>
          <Table>
            <colgroup>
              {columns.map((c) => (
                <Col key={c.title} $w={c.width} />
              ))}
            </colgroup>
            <thead>
              <tr>
                {columns.map((c) => (
                  <HeadCell key={c.title} $align={c.head}>
                    {c.title}
                  </HeadCell>
                ))}
              </tr>
            </thead>
            <tbody>
              <SelectedRow>
                {columns.map((c, i) => (
                  <Cell key={c.title} $align={c.align}>
                    {i === 0 ? <RowCheck type="checkbox" aria-label="K41 DS" /> : c.value}
                  </Cell>
                ))}
              </SelectedRow>
            </tbody>
          </Table>
        </ListBox>
      </TabPage>
      <Footer>
        <PushButton type="button" $w={134}>Donatı Hesap Makinesi</PushButton>
        <PushButton type="button" $w={70}>Seç</PushButton>
        <CheckLabel>
          <Check type="checkbox" />
          Tüm Katlar
        </CheckLabel>
        <Pair>
          <PushButton type="button" $w={43} $wide>{'<<'}</PushButton>
          <PushButton type="button" $w={43} $wide>{'>>'}</PushButton>
        </Pair>
        <PushButton type="button" $w={73}>Filtre</PushButton>
        <PushButton type="button" $w={73}>Betonarme</PushButton>
        <Pair>
          <PushButton type="button" $w={73} $primary>Tamam</PushButton>
          <PushButton type="button" $w={73}>İptal</PushButton>
        </Pair>
      </Footer>
    </Dialog>
  );
}

export default function App() {
  return (
    <Page>
      <GlobalStyle />
      <MenuBar>
        {menu.map(([label, w], i) => (
          <MenuTab type="button" key={label} $w={w} $active={i === 9}>
            {label}
          </MenuTab>
        ))}
        <MenuTools>
          <SearchBox>
            <Icon name="search" size={14} />
            <SearchInput type="text" placeholder="Herhangi bir komut ara..." aria-label="Komut ara" />
            <SearchDrop type="button" aria-label="Son komutlar"><Caret /></SearchDrop>
          </SearchBox>
          <Divider />
          <IconButton type="button" $w={22} aria-label="Katmanlar"><Icon name="layers" size={17} /></IconButton>
          <IconButton type="button" $w={25} aria-label="Katman listesi"><Icon name="layers" size={17} /></IconButton>
          <LayerBox>
            <Icon name="boxed" size={13} />
            <Icon name="lock" size={14} />
            <LayerSelect defaultValue="Standart" aria-label="Katman">
              <option>Standart</option>
            </LayerSelect>
            <Caret />
          </LayerBox>
          <ViewButton type="button">
            Görünüm
            <Caret />
          </ViewButton>
          <IconButton type="button" $w={20} aria-label="Araçlar"><Icon name="tools" /></IconButton>
          <Divider />
          <IconButton type="button" $w={20} aria-label="Yardım">
            <HelpIcon viewBox="0 0 16 16" $size={16}>
              {small.help}
              <text x="6" y="13">?</text>
            </HelpIcon>
          </IconButton>
          <IconButton type="button" $w={16} aria-label="Yardım menüsü"><Caret /></IconButton>
          <IconButton type="button" $w={18} aria-label="Küçült"><Icon name="minimize" size={13} /></IconButton>
          <IconButton type="button" $w={18} aria-label="Geri yükle"><Icon name="restore" size={13} /></IconButton>
          <IconButton type="button" $w={16} aria-label="Kapat"><Icon name="close" size={14} /></IconButton>
        </MenuTools>
      </MenuBar>
      <Ribbon />
      <Strip />
      <ToolRow>
        <Toolbar>
          {['selectBox', '', 'ruler', 'pen', 'note', '', 'dimension'].map((name, i) =>
            name ? (
              <IconButton type="button" key={name} $w={name === 'selectBox' ? 6 : 23} aria-label={name}>
                <Icon name={name} />
              </IconButton>
            ) : (
              <Divider key={i} />
            )
          )}
          <Spacer />
          <IconButton type="button" $w={22} aria-label="Izgara kaydı"><Icon name="gridRec" /></IconButton>
          <IconButton type="button" $w={24} aria-label="Tablo"><Icon name="grid" /></IconButton>
          <ToolbarEnd><Caret /></ToolbarEnd>
        </Toolbar>
      </ToolRow>
      <Body>
        <TreePanel>
          <TreeHeader>ı Ağacı</TreeHeader>
          <TreeScroll>
            <Tree>
              {treeRows.map(([guides, box, icon, label], i) => (
                <TreeRow key={i}>
                  {guides.split('').map((kind, j) => (
                    <Guide key={j} $kind={kind}>
                      {box && j === guides.length - 1 && (
                        <Expander type="button" aria-label={box === '+' ? 'Genişlet' : 'Daralt'}>
                          <svg viewBox="0 0 7 7" width="7" height="7">
                            <path d={box === '+' ? 'M1 3.5H6M3.5 1V6' : 'M1 3.5H6'} stroke="#2b4a9a" />
                          </svg>
                        </Expander>
                      )}
                    </Guide>
                  ))}
                  <Icon name={icon} />
                  <TreeLabel>{label}</TreeLabel>
                </TreeRow>
              ))}
            </Tree>
          </TreeScroll>
          <HScroll><Thumb /></HScroll>
        </TreePanel>
        <Main>
          <Views>
            <View><Plan /></View>
            <View>
              <Model />
              <ViewButtons>
                <ViewTool type="button" aria-label="Filtre"><Icon name="filter" size={13} /></ViewTool>
                <ViewTool type="button" aria-label="Kuzey"><Icon name="north" size={13} /></ViewTool>
                <ViewTool type="button" aria-label="Yukarı"><Icon name="up" size={13} /></ViewTool>
              </ViewButtons>
            </View>
          </Views>
          <CommandPanel>
            <span>Hazır</span>
            <span>Komut :</span>
          </CommandPanel>
        </Main>
        <SideRail>
          <SideTab type="button">Rapor Önizleme</SideTab>
        </SideRail>
      </Body>
      <StatusBar>
        <StatusCell $w={236} />
        <StatusCell $grow />
        <StatusCell $w={76} />
        <StatusCell $w={76} />
        <StatusCell $w={76} />
        <StatusCell $w={20} />
      </StatusBar>
      <BeamDialog />
    </Page>
  );
}

/* ---------- styles ---------- */

const GlobalStyle = createGlobalStyle`
  * {
    box-sizing: border-box;
  }

  body {
    margin: 0;
  }

  button, input, select {
    margin: 0;
    padding: 0;
    font: inherit;
    color: inherit;
    border: 0;
    background: none;
  }
`;

const Page = styled.div`
  position: relative;
  display: flex;
  flex-direction: column;
  height: 100vh;
  overflow: hidden;
  background: #cfd3dc;
  color: #444b57;
  font-family: 'Open Sans', 'Noto Sans', sans-serif;
  font-size: 11px;
  line-height: 13px;
`;

const Svg = styled.svg`
  display: block;
  flex: none;
  width: ${(p) => p.$size}px;
  height: ${(p) => p.$size}px;
  overflow: visible;
`;

const Scene = styled.svg`
  display: block;
  width: 100%;
  height: 100%;
`;

const HelpIcon = styled(Svg)`
  font-size: 12px;
  font-weight: 700;
  fill: #fff;
`;

const Caret = styled.i`
  display: inline-block;
  flex: none;
  border: 3px solid transparent;
  border-top: 4px solid #6b6f77;
  border-bottom: 0;
  margin-left: ${(p) => (p.$inline ? '3px' : 0)};
  margin-top: ${(p) => (p.$below ? '4px' : 0)};
  vertical-align: ${(p) => (p.$inline ? '2px' : 'baseline')};
`;

const MenuBar = styled.nav`
  display: flex;
  flex: none;
  height: 20px;
`;

const MenuTab = styled.button`
  flex: none;
  width: ${(p) => p.$w}px;
  padding-bottom: 2px;
  white-space: nowrap;
  border-radius: 3px 3px 0 0;
  border: 1px solid ${(p) => (p.$active ? '#d9b9bd' : 'transparent')};
  border-bottom: 0;
  background: ${(p) => (p.$active ? 'linear-gradient(#f0c9ca, #f8dfde)' : 'none')};
`;

const MenuTools = styled.div`
  display: flex;
  align-items: center;
  height: 19px;
  margin-left: auto;
`;

const SearchBox = styled.div`
  display: flex;
  align-items: center;
  width: 213px;
  height: 19px;
  padding-left: 3px;
  border: 1px solid #aeb4c0;
  border-top: 0;
  background: #fff;
`;

const SearchInput = styled.input`
  flex: 1;
  min-width: 0;
  padding-left: 2px;
  font: italic 11px 'Liberation Sans', Arial, sans-serif;

  &::placeholder {
    color: #808080;
  }
`;

const SearchDrop = styled.button`
  display: flex;
  align-items: center;
  justify-content: center;
  align-self: stretch;
  width: 14px;
  background: #eceef2;
`;

const Divider = styled.span`
  flex: none;
  width: 1px;
  height: 13px;
  margin: 0 3px;
  background: #a4a9b4;
`;

const IconButton = styled.button`
  display: flex;
  flex: none;
  align-items: center;
  justify-content: center;
  width: ${(p) => p.$w}px;
  height: 19px;
`;

const LayerBox = styled.div`
  display: flex;
  align-items: center;
  gap: 2px;
  width: 135px;
  height: 19px;
  padding: 0 4px 0 2px;
  border: 1px solid #b4bac6;
  border-top: 0;
  background: #e9ebf0;
`;

const LayerSelect = styled.select`
  flex: 1;
  appearance: none;
  padding-left: 2px;
  color: #111;
`;

const ViewButton = styled.button`
  display: flex;
  align-items: center;
  justify-content: space-between;
  width: 72px;
  padding: 0 5px 0 4px;
`;

const RibbonBar = styled.div`
  display: flex;
  flex: none;
  gap: 3px;
  height: 88px;
  padding-top: 2px;
  overflow: hidden;
  background: linear-gradient(#f3c6c6, #fae3e2 4px, #faeeec 12px, #fbf6f5 30px, #fff 52px);
`;

const GroupBox = styled.section`
  display: flex;
  flex: none;
  flex-direction: column;
  width: ${(p) => p.$w}px;
  height: 85px;
  border: 1px solid #a3a3a6;
  border-bottom-color: #77797d;
  border-radius: 3px;
  overflow: hidden;

  &:first-child {
    border-left: 0;
    border-radius: 0 3px 3px 0;
  }
`;

const GroupBody = styled.div`
  display: flex;
  flex: 1;
`;

const GroupTitle = styled.h2`
  margin: 0;
  height: 16px;
  font-size: 11px;
  font-weight: 400;
  line-height: 17px;
  text-align: center;
  background: linear-gradient(#d8dce8, #dfe3ed 50%, #bcbfc6);
`;

const BigButton = styled.button`
  display: flex;
  flex: none;
  flex-direction: column;
  align-items: center;
  width: ${(p) => p.$w}px;
  padding-top: 4px;
  white-space: nowrap;

  svg {
    margin-bottom: 4px;
  }
`;

const Rule = styled.span`
  flex: none;
  width: 1px;
  height: 55px;
  margin: 7px ${(p) => p.$gap || 0}px 0;
  background: #b5b5b8;
`;

const RowColumn = styled.div`
  display: flex;
  flex: none;
  flex-direction: column;
  align-items: ${(p) => (p.$center ? 'center' : 'flex-start')};
  width: ${(p) => p.$w}px;
`;

const RowButton = styled.button`
  display: flex;
  align-items: center;
  gap: 4px;
  height: 22px;
  white-space: nowrap;
`;

const Letter = styled.b`
  width: 16px;
  text-align: center;
  font-size: 15px;
  font-weight: ${(p) => (p.$gold ? 700 : 600)};
  color: ${(p) => (p.$gold ? '#cdb95a' : '#3f5870')};
`;

const Strip = styled.div`
  flex: none;
  height: 5px;
  background: linear-gradient(#f2f2f4 1px, #9da3ae 1px 3px, #c9cdd6 3px);
`;

const ToolRow = styled.div`
  flex: none;
  height: 24px;
  padding-right: 376px;
`;

const Toolbar = styled.div`
  display: flex;
  align-items: center;
  height: 23px;
  overflow: hidden;
  border-radius: 0 4px 4px 0;
  background: linear-gradient(#eef1f7, #dde1ea);
`;

const Spacer = styled.span`
  flex: 1;
`;

const ToolbarEnd = styled.span`
  display: flex;
  align-items: flex-end;
  justify-content: center;
  width: 10px;
  height: 100%;
  padding-bottom: 4px;
  background: #b5b9c3;
`;

const Body = styled.div`
  display: flex;
  flex: 1;
  min-height: 0;
`;

const TreePanel = styled.aside`
  display: flex;
  flex: none;
  flex-direction: column;
  width: 229px;
  margin-right: 4px;
  border-right: 1px solid #dfdfe2;
  background: #efefef;
`;

const TreeHeader = styled.h1`
  flex: none;
  margin: 0;
  height: 21px;
  font-size: 11px;
  font-weight: 400;
  line-height: 20px;
  color: #5a606b;
  background: linear-gradient(#c9cdd6, #b4b9c4);
`;

const TreeScroll = styled.div`
  flex: 1;
  min-height: 0;
  margin-right: 17px;
  overflow: hidden;
  background: #fff;
`;

const Tree = styled.ul`
  margin: 0;
  padding: 0 0 0 2px;
  list-style: none;
`;

const TreeRow = styled.li`
  display: flex;
  align-items: center;
  height: 18px;

  > svg {
    margin-left: 1px;
  }
`;

const TreeLabel = styled.span`
  padding-left: 5px;
  white-space: nowrap;
  color: #111;
`;

const dotsDown = 'repeating-linear-gradient(#8c8c8c 0 1px, transparent 1px 2px)';
const dotsAcross = 'repeating-linear-gradient(90deg, #8c8c8c 0 1px, transparent 1px 2px)';
const guides = {
  '|': `${dotsDown} 9px 0 / 1px 100% no-repeat`,
  t: `${dotsDown} 9px 0 / 1px 100% no-repeat, ${dotsAcross} 9px 9px / 10px 1px no-repeat`,
  l: `${dotsDown} 9px 0 / 1px 50% no-repeat, ${dotsAcross} 9px 9px / 10px 1px no-repeat`,
  '.': 'none',
};

const Guide = styled.span`
  display: flex;
  flex: none;
  align-items: center;
  justify-content: center;
  width: 19px;
  height: 18px;
  background: ${(p) => guides[p.$kind]};
`;

const Expander = styled.button`
  width: 9px;
  height: 9px;
  border: 1px solid #8f8f8f;
  border-radius: 1px;
  background: #fff;

  svg {
    display: block;
  }
`;

const HScroll = styled.div`
  flex: none;
  height: 19px;
  padding-top: 8px;
`;

const Thumb = styled.div`
  width: 158px;
  height: 2px;
  background: #8b8b8b;
`;

const Main = styled.main`
  display: flex;
  flex: 1;
  flex-direction: column;
  min-width: 0;
`;

const Views = styled.div`
  display: grid;
  flex: 1;
  grid-template-columns: 812fr 803fr;
  gap: 2px;
  min-height: 0;
`;

const View = styled.div`
  position: relative;
  min-width: 0;
  min-height: 0;
  border: 1px solid #a7abb5;
  outline: 1px solid #f2f3f6;
  outline-offset: -2px;
  padding: 1px;
`;

const ViewButtons = styled.div`
  position: absolute;
  top: 2px;
  right: 2px;
  display: flex;
  gap: 2px;
`;

const ViewTool = styled.button`
  display: flex;
  align-items: center;
  justify-content: center;
  width: 16px;
  height: 15px;
  border: 1px solid #444;
  background: #d2d2d2;
`;

const CommandPanel = styled.div`
  display: flex;
  flex: none;
  flex-direction: column;
  height: 60px;
  margin-top: 4px;
  padding-top: 13px;
  color: #111;
  background: #efefef;
`;

const SideRail = styled.div`
  flex: none;
  width: 20px;
  padding: 4px 0 0 2px;
`;

const SideTab = styled.button`
  width: 18px;
  height: 116px;
  padding: 3px 0 0;
  text-align: left;
  font-size: 12px;
  line-height: 16px;
  white-space: nowrap;
  writing-mode: vertical-rl;
  color: #7a745c;
  border: 1px solid #c9b97f;
  border-right: 0;
  border-radius: 2px 0 0 2px;
  background: linear-gradient(90deg, #fdf0c4, #ffd978);
`;

const StatusBar = styled.footer`
  display: flex;
  flex: none;
  height: 7px;
  border-top: 1px solid #a9adb7;
  background: linear-gradient(#eceef2, #bfc3cd);
`;

const StatusCell = styled.span`
  flex: ${(p) => (p.$grow ? 1 : 'none')};
  width: ${(p) => (p.$w ? `${p.$w}px` : 'auto')};
  margin-top: 1px;
  border-right: 1px solid #8f939c;
`;

const Dialog = styled.section`
  position: absolute;
  top: 113px;
  right: 427px;
  bottom: 115px;
  left: 103px;
  display: flex;
  flex-direction: column;
  overflow: hidden;
  border: 1px solid #b2b2b4;
  border-radius: 8px;
  background: #efefef;
  box-shadow: 0 16px 36px rgba(0, 0, 0, 0.36), 0 0 12px rgba(0, 0, 0, 0.14);
  color: #0c0c14;
  font-family: Roboto, 'Liberation Sans', sans-serif;
`;

const TitleBar = styled.header`
  display: flex;
  flex: none;
  align-items: center;
  justify-content: space-between;
  height: 31px;
  padding: 0 9px 2px 7px;
  background: linear-gradient(90deg, #eef3f8, #f7f1f1 50%, #f7f1f1 80%, #f3f3f4);
`;

const DialogTitle = styled.h2`
  margin: 0;
  padding-top: 2px;
  font-size: 12px;
  font-weight: 400;
`;

const CloseButton = styled.button`
  display: flex;
  align-items: center;
  height: 20px;
`;

const TabList = styled.div`
  display: flex;
  flex: none;
  align-items: flex-end;
  height: 27px;
  padding-left: 6px;
`;

const Tab = styled.button`
  flex: none;
  width: ${(p) => p.$w}px;
  height: ${(p) => (p.$active ? 21 : 19)}px;
  padding-bottom: ${(p) => (p.$active ? 3 : 0)}px;
  white-space: nowrap;
  border: 1px solid #e2e2e2;
  border-bottom: 0;
  border-left-width: ${(p) => (p.$active ? 1 : 0)}px;
  background: ${(p) => (p.$active ? '#fafafa' : '#f3f3f3')};
`;

const TabPage = styled.div`
  display: flex;
  flex: 1;
  min-height: 0;
  margin: 0 7px 0 6px;
  padding: 11px 11px 12px 13px;
  border: 1px solid #e2e2e2;
  box-shadow: inset 0 0 0 2px #f7f7f7;
`;

const ListBox = styled.div`
  flex: 1;
  overflow: hidden;
  border: 1px solid #828790;
  background: #fff;
`;

const Table = styled.table`
  width: 1280px;
  table-layout: fixed;
  border-collapse: separate;
  border-spacing: 0;
`;

const Col = styled.col`
  width: ${(p) => p.$w}px;
`;

const HeadCell = styled.th`
  height: 25px;
  padding: 2px 0 0 5px;
  font-weight: 400;
  text-align: ${(p) => p.$align || 'left'};
  white-space: nowrap;
  border-right: 1px solid #e2e2e2;
`;

const SelectedRow = styled.tr`
  outline: 1px dotted #000;
  outline-offset: -1px;
  background: #12e6e2;
`;

const Cell = styled.td`
  height: 18px;
  padding: ${(p) => (p.$align === 'right' ? '1px 7px 0 0' : '1px 0 0 6px')};
  text-align: ${(p) => p.$align || 'left'};
  white-space: nowrap;
  border-right: 1px solid #b9cfcf;

  &:first-child {
    padding: 0 0 0 7px;
    vertical-align: top;
    background: linear-gradient(90deg, #12e6e2 7px, #fff 7px);
  }
`;

const RowCheck = styled.input`
  appearance: none;
  display: block;
  width: 11px;
  height: 11px;
  margin-left: 1px;
  border: 1px solid #2d7f88;
  background: #fff;
`;

const Footer = styled.footer`
  display: flex;
  flex: none;
  align-items: center;
  justify-content: flex-end;
  gap: 11px;
  height: 37px;
  padding: 2px 6px 0 0;
`;

const Pair = styled.div`
  display: flex;
  gap: 8px;
`;

const PushButton = styled.button`
  width: ${(p) => p.$w}px;
  height: 21px;
  padding-top: 1px;
  font-family: ${(p) => (p.$wide ? "'DejaVu Sans Condensed', sans-serif" : 'inherit')};
  white-space: nowrap;
  border: 1px solid ${(p) => (p.$primary ? '#0067c0' : '#d0d0d0')};
  border-bottom-color: ${(p) => (p.$primary ? '#0067c0' : '#bbb')};
  border-radius: 4px;
  background: #fdfdfd;
`;

const CheckLabel = styled.label`
  display: flex;
  align-items: center;
  gap: 3px;
  width: 84px;
`;

const Check = styled.input`
  appearance: none;
  width: 13px;
  height: 13px;
  border: 1px solid #555;
  border-radius: 3px;
  background: #f7f7f7;
`;
